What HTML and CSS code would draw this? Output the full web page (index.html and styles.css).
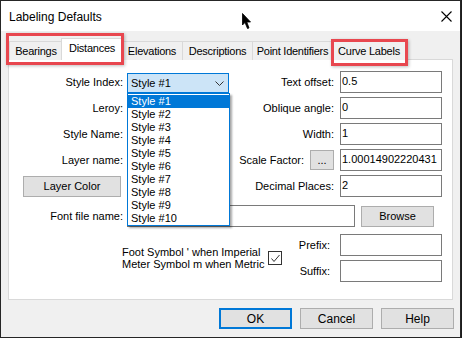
FILE: index.html
```html
<!DOCTYPE html>
<html lang="en">
<head>
  <meta charset="utf-8">
  <title>Labeling Defaults</title>
  <link rel="stylesheet" href="styles.css">
</head>
<body>

  <div class="dialog">
    <div class="titlebar">
      <span class="title">Labeling Defaults</span>
      <svg class="close" width="11" height="11" viewBox="0 0 11 11">
        <path d="M0.5 0.5 L10.5 10.5 M10.5 0.5 L0.5 10.5" stroke="#000" stroke-width="1.1" fill="none"/>
      </svg>
    </div>

    <div class="tabs">
      <div class="tab tab-bearings">Bearings</div>
      <div class="tab tab-distances active">Distances</div>
      <div class="tab tab-elevations">Elevations</div>
      <div class="tab tab-descriptions">Descriptions</div>
      <div class="tab tab-points">Point Identifiers</div>
      <div class="tab tab-curves">Curve Labels</div>
    </div>

    <div class="panel">
      <div class="form">
        <label class="lbl">Style Index:</label>
        <div class="combo">
          <span>Style #1</span>
          <svg class="chevron" width="9" height="5" viewBox="0 0 9 5">
            <polyline points="0.5,0.5 4.5,4.5 8.5,0.5" stroke="#333" stroke-width="1" fill="none"/>
          </svg>
          <ul class="droplist">
            <li class="sel">Style #1</li>
            <li>Style #2</li>
            <li>Style #3</li>
            <li>Style #4</li>
            <li>Style #5</li>
            <li>Style #6</li>
            <li>Style #7</li>
            <li>Style #8</li>
            <li>Style #9</li>
            <li>Style #10</li>
          </ul>
        </div>
        <label class="lbl rlbl">Text offset:</label>
        <input class="field" type="text" value="0.5">

        <label class="lbl">Leroy:</label>
        <input class="field" type="text" value="">
        <label class="lbl rlbl">Oblique angle:</label>
        <input class="field" type="text" value="0">

        <label class="lbl">Style Name:</label>
        <input class="field" type="text" value="">
        <label class="lbl rlbl">Width:</label>
        <input class="field" type="text" value="1">

        <label class="lbl">Layer name:</label>
        <input class="field" type="text" value="">
        <div class="scale-cell">
          <label class="lbl">Scale Factor:</label>
          <button class="btn dots">...</button>
        </div>
        <input class="field" type="text" value="1.00014902220431">

        <div class="color-cell">
          <button class="btn layer-btn">Layer Color</button>
        </div>
        <div class="swatch"></div>
        <label class="lbl rlbl">Decimal Places:</label>
        <input class="field" type="text" value="2">

        <label class="lbl font-lbl">Font file name:</label>
        <div class="font-row">
          <input class="field font-field" type="text" value="">
          <button class="btn browse">Browse</button>
        </div>

        <div class="symbol-row">
          <div class="symbol-text">Foot Symbol ' when Imperial<br>Meter Symbol m when Metric</div>
          <div class="check">
            <svg width="11" height="11" viewBox="0 0 11 11">
              <polyline points="1.5,5.5 4,8.5 9.5,2" stroke="#333" stroke-width="1" fill="none"/>
            </svg>
          </div>
          <label class="lbl fix-lbl">Prefix:</label>
          <input class="field" type="text" value="">
          <label class="lbl fix-lbl">Suffix:</label>
          <input class="field" type="text" value="">
        </div>
      </div>
    </div>

    <div class="buttons">
      <button class="btn ok">OK</button>
      <button class="btn">Cancel</button>
      <button class="btn">Help</button>
    </div>

    <!-- annotation boxes and pointer -->
    <div class="mark mark-left"></div>
    <div class="mark mark-right"></div>
    <svg class="cursor" width="10" height="17" viewBox="0 0 10 17">
      <path d="M0.5 0.5 L0.5 12 L3 9.5 L5.5 15.5 L7 15 L4.8 9 L8.5 9 Z" fill="#000" stroke="#000" stroke-width="0.8"/>
    </svg>
  </div>

</body>
</html>
```

FILE: styles.css
```css
html, body {
  margin: 0;
  padding: 0;
}
body {
  background: #1d1d1d;
  font-family: "Liberation Sans", Arial, sans-serif;
  font-size: 11px;
  color: #000;
}
.dialog {
  position: relative;
  width: 461px;
  height: 338px;
  box-sizing: border-box;
  border: 1px solid #262626;
  background: #f0f0f0;
}
.titlebar {
  height: 30px;
  background: #fff;
  display: flex;
  align-items: center;
  padding-left: 8px;
  padding-right: 8px;
}
.title {
  font-size: 12px;
  flex: 1;
  margin-top: 1px;
}
.close {
  margin-top: 1px;
}

/* tabs */
.tabs {
  display: flex;
  align-items: flex-end;
  height: 22px;
  margin-top: 7px;
  padding-left: 8px;
  position: relative;
  z-index: 1;
}
.tab {
  box-sizing: border-box;
  height: 19px;
  border: 1px solid #d9d9d9;
  border-bottom: none;
  background: #f0f0f0;
  margin-left: -1px;
  text-align: center;
  line-height: 19px;
  letter-spacing: -0.25px;
  white-space: nowrap;
}
.tab:first-child {
  margin-left: 0;
}
.tab.active {
  height: 22px;
  background: #fff;
  line-height: 18px;
  margin-left: -2px;
  margin-right: -1px;
  position: relative;
}
.tab-bearings { width: 54px; }
.tab-distances { width: 62px; }
.tab-elevations { width: 62px; }
.tab-descriptions { width: 71px; }
.tab-points { width: 81px; }
.tab-curves { width: 74px; }

/* panel */
.panel {
  box-sizing: border-box;
  width: 445px;
  height: 241px;
  margin-left: 7px;
  margin-top: -1px;
  border: 1px solid #d9d9d9;
  background: #fff;
  padding-top: 11px;
}
.form {
  display: grid;
  grid-template-columns: 118px 102px 111px 102px;
  grid-template-rows: 22px 22px 22px 22px 22px;
  grid-auto-rows: auto;
  row-gap: 4px;
}
.lbl {
  display: flex;
  align-items: center;
  justify-content: flex-end;
  padding-right: 4px;
  white-space: nowrap;
}
.rlbl {
  padding-right: 6px;
}
.field {
  box-sizing: border-box;
  width: 102px;
  height: 22px;
  margin: 0;
  border: 1px solid #7a7a7a;
  background: #fff;
  padding: 0 0 3px 1px;
  font-family: "Liberation Sans", Arial, sans-serif;
  font-size: 11px;
  color: #000;
  outline: none;
}

/* combo and dropdown */
.combo {
  position: relative;
  box-sizing: border-box;
  height: 20px;
  align-self: end;
  border: 1px solid #0078d7;
  background: #cce4f7;
  display: flex;
  align-items: center;
  padding-left: 3px;
}
.combo span {
  flex: 1;
}
.chevron {
  margin-right: 4px;
}
.droplist {
  position: absolute;
  left: -1px;
  top: 19px;
  width: 101px;
  margin: 0;
  padding: 0;
  list-style: none;
  border: 1px solid #0078d7;
  background: #fff;
  box-shadow: 2px 2px 2px rgba(0, 0, 0, 0.35);
  z-index: 5;
}
.droplist li {
  height: 13px;
  line-height: 13px;
  padding-left: 3px;
}
.droplist li:first-child {
  margin-top: 1px;
}
.droplist li.sel {
  background: #0078d7;
  color: #fff;
}

/* buttons */
.btn {
  box-sizing: border-box;
  margin: 0;
  padding: 0;
  border: 1px solid #adadad;
  background: #e1e1e1;
  font-family: "Liberation Sans", Arial, sans-serif;
  font-size: 11px;
  color: #000;
}
.scale-cell {
  display: flex;
  align-items: center;
  justify-content: flex-end;
  padding-right: 6px;
}
.scale-cell .lbl {
  padding-right: 6px;
}
.dots {
  width: 24px;
  height: 20px;
  line-height: 14px;
}
.color-cell {
  display: flex;
  align-items: center;
}
.layer-btn {
  width: 98px;
  height: 21px;
  margin-left: 14px;
}
.swatch {
  background: #11b011;
  margin-right: -1px;
}

.font-lbl {
  margin-top: 4px;
  height: 22px;
}
.font-row {
  grid-column: 2 / 5;
  display: flex;
  align-items: center;
  gap: 6px;
  margin-top: 4px;
}
.font-field {
  width: 228px;
}
.browse {
  width: 73px;
  height: 21px;
}

/* symbol row */
.symbol-row {
  grid-column: 1 / 5;
  margin-top: 3px;
  display: grid;
  grid-template-columns: 113px 146px 14px 58px 102px;
  grid-template-rows: 22px 22px;
  row-gap: 4px;
}
.symbol-text {
  grid-column: 2;
  grid-row: 1 / 3;
  align-self: center;
  line-height: 12px;
  white-space: nowrap;
}
.check {
  grid-column: 3;
  grid-row: 1 / 3;
  align-self: center;
  box-sizing: border-box;
  width: 14px;
  height: 14px;
  border: 1px solid #333;
  background: #fff;
  display: flex;
  align-items: center;
  justify-content: center;
}
.fix-lbl {
  grid-column: 4;
  padding-right: 10px;
}
.symbol-row .field {
  grid-column: 5;
}

.buttons {
  display: flex;
  justify-content: flex-end;
  gap: 8px;
  margin-top: 8px;
  margin-right: 6px;
}
.buttons .btn {
  width: 73px;
  height: 21px;
  font-size: 12px;
}
.buttons .ok {
  border: 2px solid #0078d7;
}

/* overlays */
.mark {
  position: absolute;
  border: 3px solid #e8474f;
  box-shadow: 1px 1px 3px rgba(0, 0, 0, 0.25);
  pointer-events: none;
  z-index: 10;
}
.mark-left {
  left: 5px;
  top: 32px;
  width: 112px;
  height: 26px;
}
.mark-right {
  left: 330px;
  top: 38px;
  width: 71px;
  height: 21px;
}
.cursor {
  position: absolute;
  left: 241px;
  top: 12px;
  z-index: 11;
}
```
